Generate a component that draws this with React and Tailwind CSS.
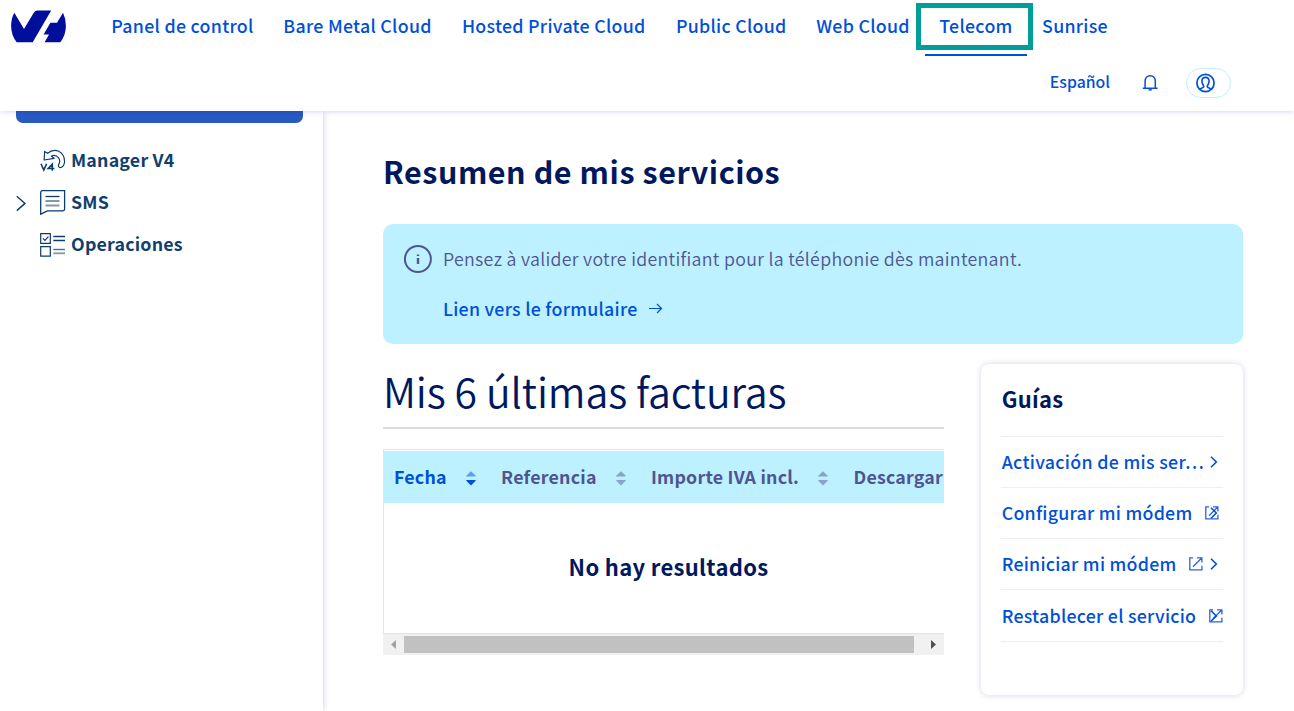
import React from "react";

const navItems = [
  { label: "Panel de control", cls: "w-[172px]" },
  { label: "Bare Metal Cloud", cls: "w-[178px]" },
  { label: "Hosted Private Cloud", cls: "w-[214.5px]" },
  { label: "Public Cloud", cls: "w-[140.5px]" },
  { label: "Web Cloud", cls: "w-[123px]" },
  { label: "Telecom", cls: "w-[102px] pl-px", active: true },
  { label: "Sunrise", cls: "w-[97px]" },
];

function Logo() {
  return (
    <svg width="56" height="34" viewBox="0 0 56 34" fill="#000e9c" className="shrink-0">
      <path d="M3.3 2.7 13 19 22.3 3.4Q23.9.6 26 .6H40.2L21.7 32.3H5.7Q.1 25 .1 16 .1 8.5 3.3 2.7Z" />
      <path d="M52 2.7Q54.9 8.5 54.9 16 54.9 25 49.3 32.3H33.6L38 24.4H32.6L39.4 12.7H46Z" />
    </svg>
  );
}

function Header() {
  return (
    <header className="relative z-10 flex h-[111px] shrink-0 flex-col bg-white shadow-[0_0_6px_rgba(0,14,156,0.2)]">
      <div className="flex h-14 items-start pl-[11px]">
        <div className="w-[85.5px] shrink-0 pt-[10px]"><Logo /></div>
        <nav className="flex h-14">
          {navItems.map((it) => (
            <a key={it.label} className={`${it.cls} relative h-14 shrink-0 pt-[11px] text-center text-[17.8px]/[28px] font-medium tracking-[0.28px] whitespace-nowrap text-[#0050d7] ${it.active ? "border-b-2 border-[#0050d7]" : ""}`}>
              {it.label}
              {it.active && <span className="absolute top-[3px] -left-[8.5px] h-[47px] w-[117px] border-[5px] border-[#009e98]" />}
            </a>
          ))}
        </nav>
      </div>
      <div className="flex h-[53px] items-center justify-end pr-[63px]">
        <span className="mr-[32px] pb-px text-[15.8px]/[24px] font-medium text-[#0050d7]">Español</span>
        <svg width="17" height="18" viewBox="0 0 17 18" fill="none" stroke="#0050d7" strokeWidth="1.5" className="mr-[27px]">
          <path d="M3.1 14V7.3C3.1 4 5.2 1.7 8.2 1.7S13.3 4 13.3 7.3V14M.8 14.3H15.6" /><path d="M6.7 15.9H9.7" />
        </svg>
        <div className="flex h-[30px] w-[45px] items-center rounded-full border border-[#bef1ff] pl-[9px]">
          <svg width="20" height="20" viewBox="0 0 20 20" fill="none" stroke="#0050d7" strokeWidth="1.7">
            <circle cx="9.5" cy="10" r="8.6" />
            <path d="M3.8 16.2C5 14.8 7.8 15.2 7.8 13.6 7.8 12.4 5.9 11 5.9 8.3 5.9 6 7.2 4.4 9.5 4.4S13.1 6 13.1 8.3C13.1 11 11.2 12.4 11.2 13.6 11.2 15.2 14 14.8 15.2 16.2" strokeWidth="1.6" />
          </svg>
        </div>
      </div>
    </header>
  );
}

function ManagerIcon() {
  return (
    <svg width="26" height="24" viewBox="0 0 26 24" fill="none" stroke="#0d3d6b" strokeWidth="1.2">
      <path d="M4.7 2.4 4.1 11 14.2 9.3 11.4 7.3Q15 4.8 18.4 8.6 21 12 18.6 15.6 18 18.3 20.3 18.6 24 18 24.6 12.8 24.6 5.2 18.4 2 12.5-.1 7.6 4.3Z" strokeLinejoin="round" />
      <path d="M1 14.7 3.8 21 6.6 14.7M12.3 21.7V15.2L8.2 19.5H14.4" strokeWidth="1.6" />
    </svg>
  );
}

function SmsIcon() {
  return (
    <svg width="26" height="26" viewBox="0 0 26 26" fill="none" stroke="#0d3d6b" strokeWidth="1.3">
      <path d="M2.5.7H24.6V19Q24.6 20.8 23 20.8H7.5L.7 24.2V2.4Q.7.7 2.5.7Z" />
      <path d="M5.5 6.5H19.5" /><path d="M5.5 11H19.5M5.5 15.5H19.5" stroke="#8697a8" strokeWidth="1.8" />
    </svg>
  );
}

function OperationsIcon() {
  return (
    <svg width="26" height="24" viewBox="0 0 26 24" fill="none" stroke="#0d3d6b" strokeWidth="1.2">
      <path d="M.7.7H10.3V10.3H.7ZM.7 13.7H10.3V23.1H.7Z" /><path d="M2.9 5.4 4.9 7.4 8.4 3.6" />
      <path d="M13.3 3.5H25M13.3 7.5H25" strokeWidth="1.4" />
      <path d="M13.3 16.5H25" stroke="#4c6a88" strokeWidth="1.4" /><path d="M13.3 20.3H25" stroke="#8697a8" strokeWidth="1.8" />
    </svg>
  );
}

function SideItem({ icon, label, expandable }) {
  return (
    <li className="flex h-[42px] items-center">
      <span className="w-[23.6px] shrink-0 pt-0.5">
        {expandable && <svg width="11" height="18" viewBox="0 0 11 18" fill="none" stroke="#0d3d6b" strokeWidth="1.4"><path d="M.8 2.2 9 9.4 .8 16.6" /></svg>}
      </span>
      <span className="flex w-[31.4px] shrink-0 items-center pt-0.5">{icon}</span>
      <span className="pb-0.5 text-[17.8px]/[24px] font-bold tracking-[0.2px] text-[#113f6d]">{label}</span>
    </li>
  );
}

function SortIcon({ active }) {
  return (
    <svg width="10" height="15" viewBox="0 0 10 15" className="relative top-px right-[0.4px] shrink-0">
      <path d="M0 5.2Q0 4.8 1 4L5 .3 9 4Q10 4.8 9.6 5.6H.4Z" fill={active ? "#5f9fe8" : "#85a3cb"} />
      <path d="M.4 9H9.6Q10 9.8 9 10.6L5 14.5 1 10.6Q0 9.8 .4 9Z" fill={active ? "#0050d7" : "#85a3cb"} />
    </svg>
  );
}

const th = "shrink-0 whitespace-nowrap text-[17.8px]/[24px] font-bold tracking-[0.22px] pb-0.5";

function Invoices() {
  return (
    <section className="w-[561px] shrink-0 pt-[20px]">
      <h2 className="flex h-[65px] items-start border-b-2 border-[#dcdcdc] text-[41px]/[52px] font-[350] tracking-[-0.13px] whitespace-nowrap text-[#00185e]">Mis 6 últimas facturas</h2>
      <div className="mt-5 overflow-hidden">
        <div className="h-[185px] border-y border-l border-[#bef1ff] pt-px">
          <div className="flex h-[52px] items-center overflow-hidden bg-[#bef1ff] pl-[10px] text-[#4d5592]">
            <span className={`${th} w-[72px] text-[#0050d7]`}>Fecha</span><SortIcon active />
            <span className={`${th} ml-[25px] w-[115px]`}>Referencia</span><SortIcon />
            <span className={`${th} ml-[25px] w-[167.5px]`}>Importe IVA incl.</span><SortIcon />
            <span className={`${th} ml-[25px]`}>Descargar</span>
          </div>
          <p className="pt-[47px] pl-[9px] text-center text-[22px]/[32px] font-bold tracking-[0.32px] text-[#00185e]">No hay resultados</p>
        </div>
        <div className="flex h-[21px] items-center bg-[#f1f1f1]">
          <svg width="21" height="17" viewBox="0 0 21 17"><path d="M13 4V13L8 8.5Z" fill="#a3a3a3" /></svg>
          <div className="h-[17px] w-[510px] bg-[#c1c1c1]" />
          <svg width="30" height="17" viewBox="0 0 30 17"><path d="M17 4V13L22 8.5Z" fill="#505050" /></svg>
        </div>
      </div>
    </section>
  );
}

function Chevron({ className }) {
  return <svg width="8" height="12" viewBox="0 0 8 12" fill="none" stroke="#0050d7" strokeWidth="1.6" className={className}><path d="M1 .8 6.3 6 1 11.2" /></svg>;
}

function External({ className }) {
  return (
    <svg width="14" height="14" viewBox="0 0 14 14" fill="none" stroke="#2f62dc" strokeWidth="1.3" className={className}>
      <path d="M4 .8H.8V12.8H12.9V8.8M8 .8H12.9V5.4M12.7 1 4 9.7" />
    </svg>
  );
}

const guides = [
  { label: "Activación de mis ser…", chev: "top-[19px]" },
  { label: "Configurar mi módem", ext: "top-[18px] left-[204px]", chev: "top-[19px]" },
  { label: "Reiniciar mi módem", ext: "top-[18px] left-[188.4px]", chev: "top-[19px]" },
  { label: "Restablecer el servicio", ext: "top-[19px] left-[208.4px]", chev: "top-[20px]" },
];

function Guides() {
  return (
    <aside className="mt-5 ml-[37px] h-[331px] w-[262px] shrink-0 rounded-lg bg-white px-5 pt-[18px] shadow-[0_0_6px_rgba(0,14,156,0.18)]">
      <h3 className="h-[54px] pl-[0.7px] text-[22px]/[32px] font-bold tracking-[0.3px] text-[#00185e]">Guías</h3>
      <ul className="border-t border-[#efefef]">
        {guides.map((g, i) => (
          <li key={g.label} className={`relative flex items-center border-b border-[#efefef] pl-[0.7px] ${i === 3 ? "h-[52px]" : "h-[51px]"}`}>
            <span className={`pb-0.5 text-[17.8px]/[24px] font-medium whitespace-nowrap text-[#0050d7] ${i === 0 ? "tracking-[0.32px]" : "tracking-[0.25px]"}`}>{g.label}</span>
            {g.ext && <External className={`absolute ${g.ext}`} />}
            <Chevron className={`absolute left-[208.6px] ${g.chev}`} />
          </li>
        ))}
      </ul>
    </aside>
  );
}

export default function App() {
  return (
    <div className="flex h-[711px] w-[1294px] flex-col overflow-hidden bg-white font-['Noto_Sans_CJK_SC','Noto_Sans_CJK_JP',sans-serif]">
      <Header />
      <div className="flex min-h-0 flex-1">
        <aside className="w-[323px] shrink-0 bg-white px-4 shadow-[0_0_6px_rgba(0,14,156,0.22)]">
          <div className="h-[12px] w-[287px] rounded-b-[7px] bg-[#2859c0]" />
          <ul className="pt-4">
            <SideItem icon={<ManagerIcon />} label="Manager V4" />
            <SideItem icon={<SmsIcon />} label="SMS" expandable />
            <SideItem icon={<OperationsIcon />} label="Operaciones" />
          </ul>
        </aside>
        <main className="w-[920px] shrink-0 pl-[60px]">
          <h1 className="h-[113px] pt-[38px] text-[30.5px]/[44px] font-bold tracking-[0.55px] whitespace-nowrap text-[#00185e]">Resumen de mis servicios</h1>
          <div className="flex h-[120px] rounded-[10px] bg-[#bef1ff] pt-[21px] pl-[20px]">
            <svg width="30" height="30" viewBox="0 0 30 30" fill="none" stroke="#4d5592" strokeWidth="2" className="shrink-0">
              <circle cx="14.9" cy="14" r="13" /><path d="M15 13V19M15 9.4V11" strokeWidth="2.4" />
            </svg>
            <div className="-mt-px ml-[10px]">
              <p className="text-[17.8px]/[28px] font-[350] tracking-[0.295px] whitespace-nowrap text-[#4d5592]">Pensez à valider votre identifiant pour la téléphonie dès maintenant.</p>
              <a className="mt-[22px] flex items-center text-[17.8px]/[28px] font-medium tracking-[0.26px] whitespace-nowrap text-[#0050d7]">
                Lien vers le formulaire
                <svg width="14" height="12" viewBox="0 0 14 12" fill="none" stroke="#0050d7" strokeWidth="1.2" className="ml-[11px]"><path d="M0 6.5H12.5M8 2 12.5 6.5 8 11" /></svg>
              </a>
            </div>
          </div>
          <div className="flex">
            <Invoices />
            <Guides />
          </div>
        </main>
      </div>
    </div>
  );
}
